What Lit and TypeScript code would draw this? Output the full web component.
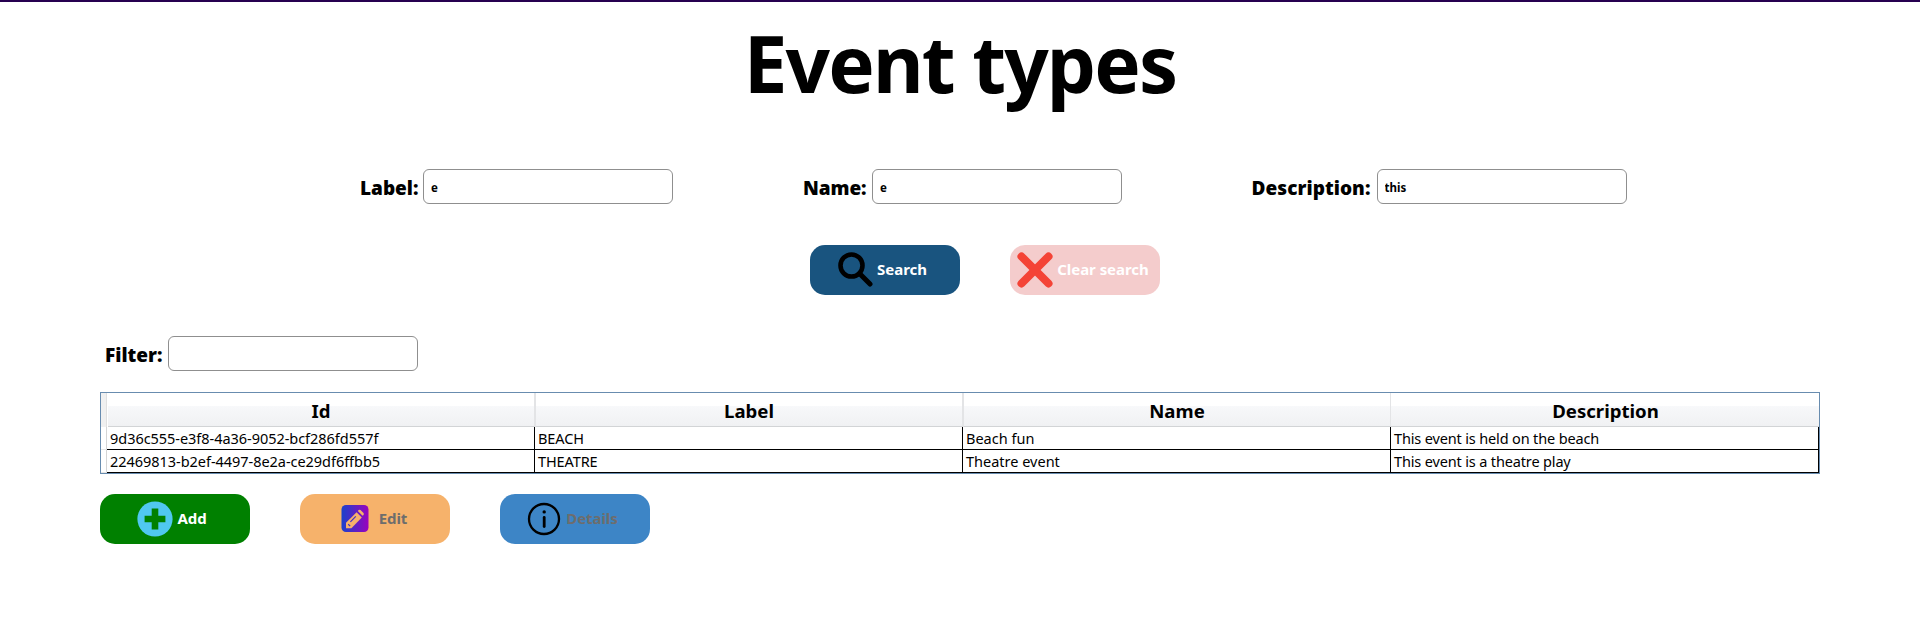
import { LitElement, html, css, svg } from "lit";
import { customElement } from "lit/decorators.js";

const icons: Record<string, unknown> = {
  search: svg`<circle cx="14.5" cy="13.5" r="11" fill="none" stroke="#000" stroke-width="4.6"/><path d="M22.5 21.5L33 32" stroke="#000" stroke-width="5" stroke-linecap="round"/>`,
  clear: svg`<path d="M4.5 4.5L31.5 31.5M31.5 4.5L4.5 31.5" stroke="#f44336" stroke-width="8" stroke-linecap="round"/>`,
  add: svg`<circle cx="18" cy="18" r="17.6" fill="#50c8f0"/><path d="M14.7 7.6h6.6v7.1h7.1v6.6h-7.1v7.1h-6.6v-7.1H7.6v-6.6h7.1z" fill="#008000"/>`,
  edit: svg`<defs><linearGradient id="g" x1="0" y1="0" x2="1" y2="0"><stop offset="0" stop-color="#1a42cc"/><stop offset="1" stop-color="#9a02bd"/></linearGradient></defs>
    <rect x="4.5" y="4" width="27" height="27" rx="4.5" fill="url(#g)"/>
    <g fill="#f6b26b"><path d="M19.6 11.2L24.8 16.4L14.4 27.2H9V21.8z"/><path d="M20.8 10l.9-.9q.9-.8 1.8 0l3 3q.8.9 0 1.8l-.9.9z"/></g>
    <path d="M18.8 15.4l-5.4 5.4M11.2 23.2l2 1.9" stroke="#4330c6" stroke-width="1.2" fill="none"/>`,
  details: svg`<circle cx="18" cy="18" r="15" fill="none" stroke="#000" stroke-width="2.3"/><path d="M18.2 16.5v9" stroke="#000" stroke-width="2.8" stroke-linecap="round"/><circle cx="18.2" cy="10.9" r="1.7"/>`,
};

@customElement("app-root")
export class AppRoot extends LitElement {
  static styles = css`
    :host {
      display: block;
      height: 643px;
      box-sizing: border-box;
      border-top: 2px solid #260050;
      background: #fff;
      color: #000;
      overflow: hidden;
      font-family: "Noto Sans", "Open Sans", sans-serif;
    }
    h1 {
      margin: 7px 0 0;
      height: 122px;
      line-height: 109px;
      text-align: center;
      font-size: 78px;
      font-weight: 700;
      letter-spacing: -1.85px;
    }
    .search { display: flex; margin-top: 38px; padding-left: 360px; }
    .field { display: flex; align-items: center; height: 35px; }
    .field label {
      font-family: "Open Sans", "Noto Sans", sans-serif;
      font-size: 19px;
      font-weight: 800;
      line-height: 35px;
      padding-top: 4px;
      white-space: nowrap;
    }
    .w-label { width: 63px; }
    .w-name { width: 69px; letter-spacing: -0.1px; }
    .w-desc { width: 125px; letter-spacing: 0.05px; }
    .w-filter { width: 63px; }
    .f-name { margin-left: 130px; }
    .f-desc { margin-left: 129.5px; }
    input {
      box-sizing: border-box;
      width: 250px;
      height: 35px;
      margin: 0;
      padding: 2px 7px 0 7px;
      border: 1px solid #8f8f8f;
      border-radius: 6px;
      background: #fff;
      color: #000;
      font: 700 11.5px "Noto Sans", "Open Sans", sans-serif;
      outline: none;
    }
    .actions { display: flex; gap: 50px; margin: 41px 0 0 810px; }
    .btn {
      display: flex;
      align-items: center;
      justify-content: center;
      gap: 4px;
      width: 150px;
      height: 50px;
      padding: 0 6px 0 0;
      border: 0;
      border-radius: 15px;
      color: #fff;
      font: 700 15px "Noto Sans", "Open Sans", sans-serif;
      letter-spacing: -0.05px;
      white-space: nowrap;
    }
    .btn svg { width: 36px; height: 36px; flex: none; }
    .btn span { padding-bottom: 2px; }
    .btn.search-btn { background: #19547f; }
    .btn.clear { background: #f4cccc; padding-right: 4px; }
    .btn.add { background: #008000; }
    .btn.edit { background: #f6b26b; color: #6d6d6d; gap: 6px; }
    .btn.details { background: #3d85c6; color: #6d6d6d; }
    .filter { margin: 41px 0 0 105px; }
    .grid {
      box-sizing: border-box;
      width: 1720px;
      height: 82px;
      margin: 21px 0 0 100px;
      border: 1px solid #688caf;
      display: grid;
      grid-template-columns: 6px repeat(4, 428px);
      grid-template-rows: 34px 23px 23px;
    }
    .head {
      box-sizing: border-box;
      position: relative;
      left: 1px;
      border-right: 2px solid #e3e4e6;
      border-bottom: 1px solid #d2d4d6;
      background: linear-gradient(#fff 0, #fff 40%, #f7f8fa 41%, #f0f1f3 100%);
      text-align: center;
      font-size: 18.6px;
      font-weight: 700;
      line-height: 36px;
    }
    .head:nth-child(5) { left: 0; padding-left: 1px; border-right: 0; }
    .corner { background: #f0f0f0; border-right: 1px solid #e0e0e0; }
    .rowhead { border-right: 1px solid #d5d5d5; border-bottom: 1px solid #e6e6e6; }
    .cell {
      box-sizing: border-box;
      padding-left: 3px;
      border-right: 1px solid #000;
      border-bottom: 1px solid #000;
      font-size: 14.5px;
      line-height: 22px;
      white-space: nowrap;
    }
    .c0 { letter-spacing: -0.04px; }
    .c1 { letter-spacing: -0.1px; }
    .c3 { letter-spacing: -0.15px; }
    .bottom { display: flex; gap: 50px; margin: 20px 0 0 100px; }
  `;

  private rows = [
    ["9d36c555-e3f8-4a36-9052-bcf286fd557f", "BEACH", "Beach fun", "This event is held on the beach"],
    ["22469813-b2ef-4497-8e2a-ce29df6ffbb5", "THEATRE", "Theatre event", "This event is a theatre play"],
  ];

  private field(name: string, cls: string, value: string) {
    return html`<div class="field f-${cls}"><label class="w-${cls}">${name}:</label><input .value=${value} /></div>`;
  }

  private button(text: string, cls: string, icon: string) {
    return html`<button class="btn ${cls}"><svg viewBox="0 0 36 36">${icons[icon]}</svg><span>${text}</span></button>`;
  }

  render() {
    return html`
      <h1><span>Event types</span></h1>
      <div class="search">
        ${this.field("Label", "label", "e")} ${this.field("Name", "name", "e")} ${this.field("Description", "desc", "this")}
      </div>
      <div class="actions">
        ${this.button("Search", "search-btn", "search")} ${this.button("Clear search", "clear", "clear")}
      </div>
      <div class="filter">${this.field("Filter", "filter", "")}</div>
      <div class="grid">
        <div class="corner"></div>
        ${["Id", "Label", "Name", "Description"].map((h) => html`<div class="head">${h}</div>`)}
        ${this.rows.map((r) => html`<div class="rowhead"></div>${r.map((c, i) => html`<div class="cell c${i}">${c}</div>`)}`)}
      </div>
      <div class="bottom">
        ${this.button("Add", "add", "add")} ${this.button("Edit", "edit", "edit")} ${this.button("Details", "details", "details")}
      </div>
    `;
  }
}
